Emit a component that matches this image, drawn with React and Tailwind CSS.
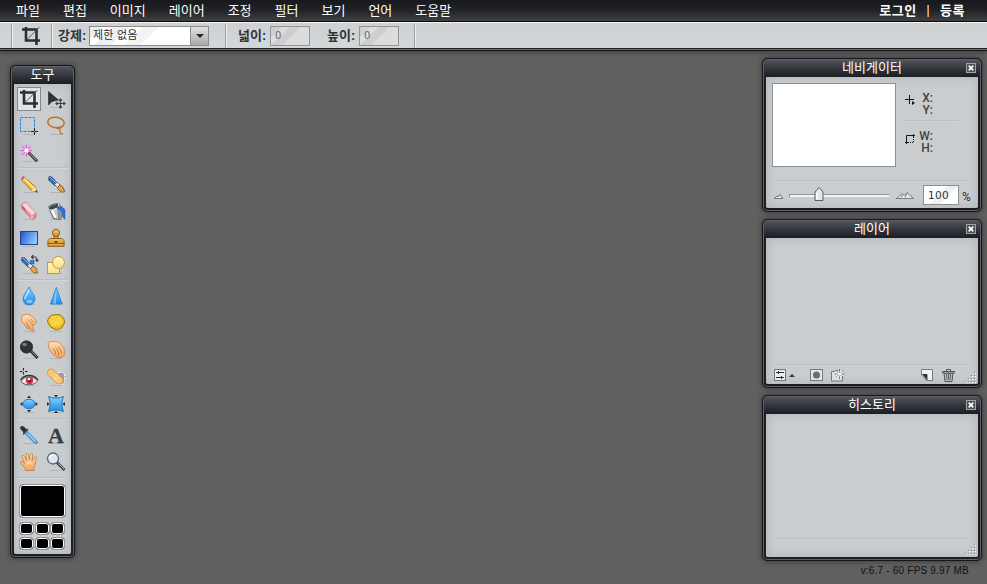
import React from 'react'
import clsx from 'clsx'

const MENU = ['파일', '편집', '이미지', '레이어', '조정', '필터', '보기', '언어', '도움말']

const CropIcon = () => (
    <g fill="none">
        <path d="M7 3v13.500h14M3 5.500h14.500V21" stroke="#2d2e31" strokeWidth="2.600" />
        <path d="M8.500 15L20.500 3" stroke="#55585c" strokeWidth="1" />
    </g>
)

const Brush = () => (
    <g>
        <path d="M5 4.500l3 .5 5.500 6.500-2.500 2.500-6.500-6z" fill="#2f6dbd" stroke="#31496b" strokeWidth=".7" />
        <path d="M6 5l6 6" stroke="#8ab8ef" />
        <path d="M10.500 12.500l2.500-2.500 3 3-2.500 2.500z" fill="#e7e8e6" stroke="#545960" strokeWidth=".8" />
        <path d="M13.500 15.500l2.500-2.500c3 1 4 4 4.500 7-3 .5-6-1-7-4.500z" fill="#dda756" stroke="#80521e" strokeWidth=".9" />
    </g>
)

const ICONS = {
    crop: <CropIcon />,
    move: (
        <g>
            <path d="M4.500 4.500v13.500l3.500-3.500L14.500 13z" fill="#303236" stroke="#242529" strokeWidth=".6" />
            <path d="M16.500 12v9M12 16.500h9M15 13.500l1.500-1.500 1.500 1.500M15 19.500l1.500 1.500 1.500-1.500M13.500 15L12 16.500l1.500 1.500M19.500 15l1.500 1.500-1.500 1.500" fill="none" stroke="#3d4044" strokeWidth="1.100" />
        </g>
    ),
    marquee: (
        <g fill="none">
            <rect x="3.500" y="3.500" width="14" height="14" stroke="#1789e8" strokeDasharray="3 1" />
            <path d="M17.500 14v3M17.500 18v3M14 17.500h3M18 17.500h3" stroke="#202225" />
        </g>
    ),
    lasso: (
        <g fill="none" stroke="#bd741f" strokeWidth="1.500">
            <ellipse cx="12" cy="8.500" rx="8.300" ry="5.200" transform="rotate(8 12 8.500)" />
            <path d="M18.500 12c-1 2.500-5.500 3.500-6 1.700 1-1.700 4 1 3.500 3.800 0 1.500 1.500 2.500 3 2.700" strokeWidth="1.200" />
        </g>
    ),
    wand: (
        <g>
            <circle cx="9.500" cy="9.500" r="5.500" fill="#eda0e6" opacity=".65" />
            <path d="M9.500 3.500v12M3.500 9.500h12M5.300 5.300l8.400 8.400M13.700 5.300l-8.400 8.400" stroke="#c455b9" strokeWidth=".8" />
            <circle cx="9.500" cy="9.500" r="2.200" fill="#fff" />
            <path d="M11.500 11.500l8.700 8.700" stroke="#303135" strokeWidth="2.800" />
            <path d="M11.800 11.500l8 8" stroke="#bcbec1" />
        </g>
    ),
    pencil: (
        <g>
            <path d="M6.500 4.500L18 14.500l2.500 6-6-2L4.500 8z" fill="#f6b91c" stroke="#9c6715" strokeWidth=".8" />
            <path d="M7.500 7l9 9" stroke="#ffe88a" strokeWidth="1.800" />
            <path d="M6.500 4.300L9 6.500 6.500 9.500 4 7.500c0-2 1-3 2.500-3.200z" fill="#d56b68" />
            <path d="M8.500 6L6 8.800" stroke="#f0ead9" strokeWidth="1.200" />
            <path d="M18 14.500l2.500 6-6-2z" fill="#f7deb5" />
            <path d="M19.500 18l1 2.500-2.600-.9z" fill="#3c352c" />
        </g>
    ),
    brush: <Brush />,
    eraser: (
        <g>
            <path d="M4.500 5.500l4-2.500L19 14v4.500l-4 2L5 9.500z" fill="#e8899a" stroke="#c96a7c" strokeWidth=".7" />
            <path d="M4.800 5.800l4-2.400L18.700 14l-4 2.200z" fill="#fbd0d6" />
            <path d="M15 16.500v3.500" stroke="#fff" strokeWidth=".7" />
            <path d="M4.800 6l3.700 4v2.500L5.200 9z" fill="#d9536a" />
        </g>
    ),
    bucket: (
        <g>
            <path d="M4 7.500L9.500 19.500l7 1 3-9.500-5-7z" fill="#c9cccf" stroke="#54575b" strokeWidth=".9" />
            <path d="M6.500 11.500L11 19l1.500.2L9 10.500z" fill="#fff" />
            <path d="M13 10l1 9.500 2 .5 1.500-7z" fill="#8b8f94" />
            <ellipse cx="9.300" cy="7.300" rx="5.700" ry="3.200" transform="rotate(-22 9.300 7.300)" fill="#44484d" stroke="#f1f2f3" strokeWidth=".9" />
            <path d="M5 9c0-2 4-4 7-4" fill="none" stroke="#a7abaf" />
            <path d="M12 8c3-1.500 8 0 9 3v9.500c-2-1.500-3-4-3.500-8-1.500-1.500-4-2-5.500-4.500z" fill="#2a72cb" stroke="#194c93" strokeWidth=".4" />
        </g>
    ),
    gradient: (
        <g>
            <rect x="3.500" y="5.500" width="17" height="13" fill="url(#blueH)" stroke="#273f99" />
        </g>
    ),
    stamp: (
        <g fill="url(#gold)" stroke="#925d17">
            <path d="M10 9.500h4v4h-4z" />
            <circle cx="12" cy="6.800" r="3.600" />
            <path d="M6 12.500h12l2 2v4H4v-4z" />
            <rect x="4" y="17.500" width="16" height="2.800" />
            <path d="M10 15h4l-2 2.500z" fill="#6b3b0d" stroke="none" />
        </g>
    ),
    clone: (
        <g>
            <Brush />
            <rect x="13.500" y="7.500" width="3.500" height="3.500" fill="#158de9" stroke="#145aa0" strokeWidth=".6" />
            <path d="M15 4h3c1 0 2 .5 2 4M16.500 2l-2 2 2 2M18.500 6.700l1.500 1.800 1.500-1.800" fill="none" stroke="#3a3d42" strokeWidth="1.100" />
        </g>
    ),
    shapes: (
        <g fill="url(#cream)" stroke="#c79935">
            <rect x="3.500" y="9.500" width="12" height="11" />
            <circle cx="14.500" cy="9.500" r="6" />
        </g>
    ),
    blur: (
        <g>
            <path d="M12 3c2 4.500 6 8 6 12a6 6 0 01-12 0c0-4 4-7.500 6-12z" fill="url(#blueV)" stroke="#2076c4" strokeWidth=".7" />
            <path d="M12 6c-1.500 4-4 6-4 9" fill="none" stroke="#c7eaff" strokeWidth="1.300" />
            <ellipse cx="12.500" cy="17.500" rx="3" ry="1.800" fill="#9cdcff" opacity=".7" />
        </g>
    ),
    sharpen: (
        <g>
            <path d="M12.300 3.300L18.200 20H6.500z" fill="url(#blueV)" stroke="#1f80dd" strokeWidth=".8" />
            <path d="M12 7v12.500L9 19.500z" fill="#a3dbff" opacity=".6" />
        </g>
    ),
    smudge: (
        <g>
            <path d="M5 4.500L10.500 3l5 2.500L19 10c.5 2-.5 3.500-2 4l-2-.8 1.700 6c0 1.500-1.700 1.800-2.500.5L11 14.500l1 3c-1 1-2 .5-2.500-.5L8 14c-2-1-3-3-3.500-5z" fill="url(#skin)" stroke="#c0773f" strokeWidth=".7" />
            <path d="M11 8.500l4 4.500M9 11l2 3.500M14 8l3 4" stroke="#b97140" fill="none" strokeWidth=".7" />
        </g>
    ),
    sponge: (
        <g>
            <path d="M8 4l7-.5c4 2 6 5 5.500 8.500l-3 5-5 2-6-3L3.500 11c0-3 2-6 4.500-7z" fill="#ebbc20" stroke="#a2770d" />
            <path d="M8 5l6-.5 4.500 4v4l-4 3H9l-4-4.500z" fill="#fade4e" opacity=".8" />
            <path d="M8 8h1M12 6h1M14 10h1M9 12h1M6 11h1M12 14h1M16 13h1M11 9h1" stroke="#d5ab20" />
        </g>
    ),
    dodge: (
        <g>
            <path d="M13 12l7.500 8" stroke="#292a2d" strokeWidth="3" />
            <path d="M14 12.500l6 6.500" stroke="#9ea1a6" />
            <circle cx="9.500" cy="9" r="6.200" fill="#303135" stroke="#1c1d20" strokeWidth=".6" />
            <ellipse cx="7.500" cy="6.500" rx="2.500" ry="1.700" fill="#8b8e93" opacity=".75" />
        </g>
    ),
    burn: (
        <g>
            <path d="M4 4.500l4-1 6 .5 4 3.500c3 3 3.500 7 2 10.500l-3 1.500-3.500.5-2.500-2.500-3-2-3-5z" fill="url(#skin)" stroke="#c0773f" strokeWidth=".7" />
            <path d="M14 8.500c2 1.500 3 4 3.500 7M11.500 9.500c2 1.500 3 4 3 8M9 11c1.500 0 2.500 2 2.500 5" stroke="#b06b38" fill="none" strokeWidth=".8" />
        </g>
    ),
    redeye: (
        <g>
            <path d="M6.500 3v2.500M6.500 7v2.500M3 6.500h2.500M8 6.500h2.500" stroke="#1d1f22" />
            <path d="M4 16.500c3-6 13-6 16.500-.5-4 5-12.500 5-16.500.5z" fill="#f3eeee" stroke="#55565a" strokeWidth="1" />
            <path d="M3.500 15c4-6 13.500-6 17.500 0" fill="none" stroke="#333438" strokeWidth="1.300" />
            <circle cx="12.500" cy="15.500" r="3.700" fill="#d82c40" />
            <circle cx="12.500" cy="15.500" r="1.500" fill="#641622" />
            <circle cx="12" cy="14" r="1.300" fill="#fff" />
        </g>
    ),
    heal: (
        <g>
            <path d="M14 7.500h4.500l2 2v7.500l-2 2H13z" fill="#999da2" stroke="#fff" strokeDasharray="2 1.500" />
            <rect x="1.800" y="7.800" width="18.500" height="7.400" rx="3.700" fill="#fac478" stroke="#cf8f3c" strokeWidth=".8" transform="rotate(43 11 11.500)" />
            <path d="M9 12.500l3-3.500 3 3-3 3.500z" fill="#ffe2ac" />
            <path d="M11 11h1M12 13h1M13 11.500h1M10.500 12.500h1" stroke="#c9924b" strokeWidth=".7" />
        </g>
    ),
    bloat: (
        <g>
            <ellipse cx="12" cy="12" rx="6" ry="4.800" fill="url(#blueV)" stroke="#2277bd" />
            <path d="M12 3.500l2 2.500h-4zM12 20.500l2-2.500h-4zM3 12l2.500-2v4zM21 12l-2.500-2v4z" fill="#292b2f" />
        </g>
    ),
    pinch: (
        <g>
            <path d="M4.500 4.500c4.500 2 10.500 2 15 0-2 4.500-2 10 0 15-4.500-2-10.500-2-15 0 2-5 2-10.500 0-15z" fill="url(#blueV)" stroke="#2375b7" />
            <path d="M12 5.500l2-2.500h-4zM12 18.500l2 2.500h-4zM5.500 12L3 10v4zM18.500 12L21 10v4z" fill="#292b2f" />
        </g>
    ),
    picker: (
        <g>
            <path d="M10 8l10.500 11-.5 1.500L17.500 20 7.500 10z" fill="#54b7f5" stroke="#2472af" strokeWidth=".8" />
            <path d="M11 10.500l7.500 8" stroke="#c8edff" />
            <path d="M3.500 3.500c2-1.500 4 0 5 2l2.500 1-4 4.500-1.500-3c-2-1-3-3-2-4.500z" fill="#2d3035" />
            <path d="M11 6l-5 5.500" stroke="#4a4e54" strokeWidth="1.600" />
        </g>
    ),
    text: (
        <text x="12" y="20" textAnchor="middle" fill="#3b3c3f" stroke="#3b3c3f" strokeWidth=".3" fontSize="22" fontWeight="700" fontFamily="Liberation Serif, serif">A</text>
    ),
    hand: (
        <g>
            <path d="M9 20.500c-1-3-5-6-5.500-8.500 1-1.500 2.500 0 4 1.500L5 6.500C5 5 7 5 7.500 6.500l2 4L9 4.500c0-1.500 2-1.500 2.300 0l1 5.500 1.200-5.700c.5-1.300 2.200-1 2.100.5L15 11l2.500-4c1-1 2.300-.2 1.900 1L18 14c-.5 3-1 4-1.500 6.500z" fill="url(#skin)" stroke="#c67c3b" strokeWidth=".8" />
            <path d="M9.500 14c2-1.500 5-1.500 6 0" fill="none" stroke="#fff0d3" />
        </g>
    ),
    zoom: (
        <g>
            <path d="M13 12.500l7.500 7.500" stroke="#3e4145" strokeWidth="2.800" />
            <path d="M14.500 13.500l5.500 5.500" stroke="#dfe2e4" strokeWidth=".8" />
            <circle cx="9" cy="8.500" r="5.500" fill="#dce9f5" stroke="#5f646a" strokeWidth="1.300" />
            <path d="M6 8c0-2 1.500-3 3-3" fill="none" stroke="#fff" strokeWidth="1.300" />
        </g>
    ),
}

const TOOL_GROUPS = [
    ['crop', 'move', 'marquee', 'lasso', 'wand'],
    ['pencil', 'brush', 'eraser', 'bucket', 'gradient', 'stamp', 'clone', 'shapes'],
    ['blur', 'sharpen', 'smudge', 'sponge', 'dodge', 'burn', 'redeye', 'heal', 'bloat', 'pinch'],
    ['picker', 'text', 'hand', 'zoom'],
]

// Shared gradients for the tool icons
const Gradients = () => (
    <svg className="absolute size-0" aria-hidden="true">
        <defs>
            <linearGradient id="blueH" y2=".4">
                <stop offset="0" stopColor="#1b52cc" />
                <stop offset="1" stopColor="#8fc6fb" />
            </linearGradient>
            <linearGradient id="blueV" x2="0" y2="1">
                <stop offset="0" stopColor="#8fd0fb" />
                <stop offset=".5" stopColor="#4fb0f6" />
                <stop offset="1" stopColor="#2589e3" />
            </linearGradient>
            <linearGradient id="gold" x2="0" y2="1">
                <stop offset="0" stopColor="#f2c76d" />
                <stop offset="1" stopColor="#cd8b28" />
            </linearGradient>
            <linearGradient id="cream" x2="0" y2="1">
                <stop offset="0" stopColor="#fff8cc" />
                <stop offset="1" stopColor="#fbdf83" />
            </linearGradient>
            <linearGradient id="skin" x2="0" y2="1">
                <stop offset="0" stopColor="#ffe1b9" />
                <stop offset="1" stopColor="#f0a257" />
            </linearGradient>
        </defs>
    </svg>
)

const Separator = ({ className }) => (
    <div className={clsx('h-0.5 border-t border-[#b9bec1] border-b border-b-[#d3d6d9]', className)} />
)

const Tool = ({ name, active }) => (
    <div className={clsx('h-6 w-6', active && 'bg-[#e1e4e7] outline-1 -outline-offset-1 outline-[#85898d]')}>
        <svg viewBox="0 0 24 24" className="block h-6 w-6">
            {!active && <path d="M6 20.500h12" stroke="#9ea3a7" strokeWidth=".8" opacity=".7" />}
            {ICONS[name]}
        </svg>
    </div>
)

const CloseButton = () => (
    <svg viewBox="0 0 10 10" className="absolute top-[3px] right-1 h-[10px] w-[10px]">
        <rect x=".5" y=".5" width="9" height="9" fill="#4b4f54" stroke="#a0a3a5" />
        <path d="M2.700 2.700l4.600 4.600M7.300 2.700L2.700 7.300" stroke="#fff" strokeWidth="1.700" />
    </svg>
)

const Panel = ({ title, closable, className, children }) => (
    <section className={clsx('rounded-[5px] border border-[#15171a] bg-[#1d1f24] px-[3px] pb-[3px] shadow-[inset_0_0_0_1px_#5d6064,0_0_5px_1px_rgba(0,0,0,0.35)]', className)}>
        <h2 className="relative -mx-[2px] mt-px h-[17px] rounded-t-[3px] bg-linear-to-b from-[#51555b] via-[#33363c] to-[#1b1d22] text-center text-[13px] leading-[15px] text-white">
            {title}
            {closable && <CloseButton />}
        </h2>
        <div className="relative flex h-[calc(100%-18px)] flex-col rounded-b-[2px] bg-[#cacdd0] shadow-[inset_0_0_12px_#adb3b9]">
            {children}
        </div>
    </section>
)

const Grip = ({ className }) => (
    <svg viewBox="0 0 12 12" className={clsx('h-3 w-3', className)}>
        {[0, 1, 2, 3].map((row) =>
            Array.from({ length: row + 1 }, (_, i) => (
                <g key={`${row}-${i}`}>
                    <rect x={10 - i * 3} y={row * 3} width="1" height="1" fill="#85898d" />
                    <rect x={11 - i * 3} y={row * 3 + 1} width="1" height="1" fill="#fff" />
                </g>
            ))
        )}
    </svg>
)

const Swatches = () => (
    <div className="mt-[5px] ml-[5px]">
        <div className="h-[34px] w-[47px] rounded-[4px] border border-[#909396] bg-black shadow-[inset_0_0_0_1px_#fff]" />
        <div className="mt-1 grid w-[46px] grid-cols-3 gap-x-[1px] gap-y-[2px]">
            {[1, 2, 3, 4, 5, 6].map((n) => (
                <div key={n} className="h-[13px] w-[15px] rounded-[4px] border border-[#909396] bg-black shadow-[inset_0_0_0_1px_#fff]" />
            ))}
        </div>
    </div>
)

const ToolPanel = () => (
    <Panel title="도구" className="mt-[16px] ml-[10px] h-[493px] w-[65px]">
        <div className="pt-[3px] pl-[3px]">
            {TOOL_GROUPS.map((group, i) => (
                <div key={i}>
                    <div className="grid grid-cols-[24px_24px] gap-[3px]">
                        {group.map((name) => (
                            <Tool key={name} name={name} active={name === 'crop'} />
                        ))}
                    </div>
                    {i < 3 && <Separator className="mt-[2px] mr-[3px] mb-[3px]" />}
                </div>
            ))}
        </div>
        <Separator className="mx-[3px] mt-[3px]" />
        <Swatches />
    </Panel>
)

const Divider = ({ className }) => (
    <div className={clsx('h-6 w-[2px] border-l border-[#9da1a6] bg-[#eceef0]', className)} />
)

const DisabledField = () => (
    <div className="h-5 w-10 border border-[#929497] bg-[linear-gradient(135deg,#cfcfcf_0_18%,#dedede_19%_32%,#cecece_33%_52%,#dcdcdc_53%)] pl-1 font-['DejaVu_Sans',sans-serif] text-[10px] leading-[18px] text-[#66686b]">0</div>
)

const OptionsBar = () => (
    <div className="flex h-[26px] items-center border-t border-[#f3f5f6] bg-linear-to-b from-[#cdd1d4] to-[#d2d7d9] text-[13px] text-[#303236]">
        <Divider className="ml-[11px]" />
        <svg viewBox="0 0 24 24" className="ml-[6px] h-6 w-6"><CropIcon /></svg>
        <Divider className="ml-2" />
        <span className="ml-[5px] w-[31px] font-bold whitespace-nowrap">강제:</span>
        <div className="flex h-5 w-[120px] border border-[#8b8e91] bg-[linear-gradient(135deg,#ededed_0_8%,#fff_9%_16%,#efefef_17%_28%,#fff_29%_38%,#f3f3f3_39%_50%,#fff_51%)]">
            <span className="flex-1 pl-[3px] text-[11px] leading-[17px] tracking-[0.2px] text-[#2c2c2c]">제한 없음</span>
            <span className="flex w-[18px] items-center justify-center border-l border-[#8b8e91] bg-linear-to-b from-[#e0e0e0] to-[#aaa]">
                <svg viewBox="0 0 8 4" className="h-1 w-2"><path d="M0 0h8L4 4z" fill="#25272a" /></svg>
            </span>
        </div>
        <Divider className="ml-4" />
        <span className="ml-[11px] w-8 font-bold whitespace-nowrap">넓이:</span>
        <DisabledField />
        <span className="ml-[17px] w-8 font-bold whitespace-nowrap">높이:</span>
        <DisabledField />
        <Divider className="ml-[15px]" />
    </div>
)

const Navigator = () => (
    <Panel title="네비게이터" closable className="h-[154px]">
        <div className="flex pt-[6px] pl-[6px]">
            <div className="h-[84px] w-[124px] border border-[#8d9093] bg-white" />
            <div className="ml-[7px] w-[54px] font-['Roboto',sans-serif] text-[12px] leading-[12px] font-medium text-[#404346]">
                <div className="flex h-[37px] pt-[9px]">
                    <svg viewBox="0 0 12 12" className="mt-[2px] ml-px h-3 w-3">
                        <path d="M5.500 1v9M1 5.500h9" stroke="#151618" />
                        <path d="M8 7v4l3-2z" fill="#151618" />
                    </svg>
                    <p className="w-[17px] text-right">X:<br />Y:</p>
                </div>
                <Separator />
                <div className="flex pt-[8px]">
                    <svg viewBox="0 0 12 12" className="mt-[3px] ml-px h-3 w-3" fill="none" stroke="#17181a">
                        <path d="M2.500 11V2.500H11M1 9.500h3M9.500 1v3" />
                        <path d="M9.500 4v6M4 9.500h6" strokeDasharray="1 1" />
                    </svg>
                    <p className="w-[17px] text-right">W:<br />H:</p>
                </div>
            </div>
        </div>
        <Separator className="mx-2 mt-[13px]" />
        <div className="mt-[3px] flex h-5 items-center pl-[8px]">
            <svg viewBox="0 0 9 5" className="mt-[3px] h-[5px] w-[9px]">
                <path d="M0 4.500L3 2l1 1L6 .500 9 4.500z" fill="#f0f1f2" />
                <path d="M0 4.500h9L6 .500 4 3 3 2 .5 4" fill="none" stroke="#54575a" strokeWidth=".8" />
            </svg>
            <div className="relative ml-[6px] h-[3px] w-[100px] border-t border-l border-[#929598] bg-[#f0f1f2]">
                <svg viewBox="0 0 10 14" className="absolute -top-[8px] left-[24px] h-[14px] w-[10px]">
                    <path d="M1 13.500V5L5 .500 9 5v8.500z" fill="#e5e7e9" stroke="#5a5e62" />
                    <path d="M3 5.500v7" stroke="#fff" strokeWidth="1.500" />
                </svg>
            </div>
            <svg viewBox="0 0 18 7" className="ml-[7px] h-[7px] w-[18px]">
                <path d="M0 6.500l6-5 2 2 3-3 6 6z" fill="#e5e7e8" />
                <path d="M0 6.500h17.500L11 .500 8 3.500l-2-2-5.500 5M5 5.500l1.500-3M9 5.500l2-4" fill="none" stroke="#63666a" strokeWidth=".8" />
            </svg>
            <div className="ml-[9px] h-5 w-9 border border-[#8d9093] bg-[linear-gradient(135deg,#fff_0_45%,#f0f0f0_46%_65%,#fff_66%)] pl-1 font-['DejaVu_Sans',sans-serif] text-[10.500px] leading-[18px] tracking-[0.3px] text-[#333]">100</div>
            <span className="ml-[3px] pt-[3px] font-['Roboto',sans-serif] text-[12px] text-[#333]">%</span>
        </div>
    </Panel>
)

const Layers = () => (
    <Panel title="레이어" closable className="h-[169px]">
        <Separator className="mx-2 mt-[126px]" />
        <div className="flex h-[18px] items-center pl-2">
            <svg viewBox="0 0 12 12" className="h-3 w-3">
                <rect x=".5" y=".5" width="11" height="11" fill="#e9ebec" stroke="#74777a" />
                <path d="M2 3.500h8M2 8.500h8M4.500 2v3M7.500 7v3" stroke="#2c2f32" />
            </svg>
            <svg viewBox="0 0 6 3" className="ml-[3px] h-[3px] w-[6px]"><path d="M0 3h6L3 0z" fill="#34373a" /></svg>
            <svg viewBox="0 0 13 12" className="ml-[15px] h-3 w-[13px]">
                <rect x=".5" y=".5" width="12" height="11" fill="#e2e4e6" stroke="#777a7d" />
                <circle cx="6.500" cy="6" r="3.500" fill="#6b6e71" />
            </svg>
            <svg viewBox="0 0 14 13" className="ml-2 h-[13px] w-[14px]">
                <path d="M.5 2.500h3l1-1h3v4h4v6.500H.500z" fill="#dee0e2" stroke="#74777a" />
                <circle cx="8.500" cy="5" r="3.500" fill="#fff" />
                <path d="M8.500 0v3.500M8.500 6.500V10M3.500 5H7M10 5h3.500M5 1.500l2.500 2.500M9.500 6L12 8.500M12 1.500L9.500 4M7.500 6L5 8.500" stroke="#63666a" strokeWidth=".8" />
            </svg>
            <svg viewBox="0 0 12 12" className="ml-[76px] h-3 w-3">
                <path d="M.5.500h11v11H6L.500 6z" fill="#f0f1f2" stroke="#77797c" />
                <path d="M1 5h5v6z" fill="#27292c" />
                <path d="M6 5.500v6" stroke="#4a4d51" />
            </svg>
            <svg viewBox="0 0 13 13" className="ml-[9px] h-[13px] w-[13px]">
                <path d="M2 4h9l-1 8.500H3z" fill="#b9bcbf" stroke="#505357" />
                <path d="M4.500 5l.5 6M6.500 5v6M8.500 5L8 11" stroke="#65686c" />
                <path d="M4.500 2V.500h4V2M.5 2.500h12V4H.500z" fill="#d8dadb" stroke="#505357" />
            </svg>
            <Grip className="mt-[5px] ml-[9px]" />
        </div>
    </Panel>
)

const History = () => (
    <Panel title="히스토리" closable className="h-[166px]">
        <Separator className="mx-2 mt-[124px]" />
        <Grip className="mt-1 mr-[2px] self-end" />
    </Panel>
)

export default function App() {
    return (
        <div className="flex h-[584px] w-[987px] flex-col overflow-hidden bg-[#606060] font-['Liberation_Sans','Noto_Sans_CJK_KR',sans-serif]">
            <Gradients />
            <header className="shrink-0 border-b border-[#202224] shadow-[0_1px_0_#6d6d6d,0_2px_0_#151515,0_4px_4px_rgba(0,0,0,0.3)]">
                <nav className="flex h-[22px] items-center border-b border-[#08090a] bg-linear-to-b from-[#17191e] via-[#222326] to-[#414141] pr-[22px] pl-4 text-[13px] leading-5 text-white">
                    <ul className="flex gap-[23px]">
                        {MENU.map((item) => (
                            <li key={item}>{item}</li>
                        ))}
                    </ul>
                    <div className="ml-auto flex items-center font-bold tracking-[0.6px]">
                        <span>로그인</span>
                        <span className="mr-[11px] ml-[10px] h-3 w-[2px] border-l border-[#6385df] bg-[#ee9b66]" />
                        <span>등록</span>
                    </div>
                </nav>
                <OptionsBar />
            </header>
            <main className="flex flex-1 justify-between">
                <ToolPanel />
                <aside className="mt-[9px] mr-[5px] flex w-[220px] flex-col gap-[7px]">
                    <Navigator />
                    <Layers />
                    <History />
                    <p className="-mt-[3px] pr-[13px] text-right text-[10px] leading-[12px] tracking-[0.2px] text-[#111]">v:6.7 - 60 FPS 9.97 MB</p>
                </aside>
            </main>
        </div>
    )
}
